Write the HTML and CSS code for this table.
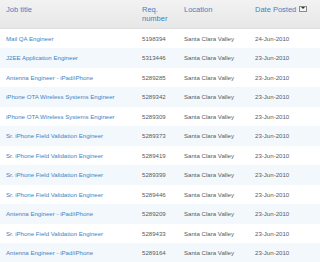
FILE: index.html
```html
<!DOCTYPE html>
<html lang="en">
  <head>
    <meta charset="UTF-8" />
    <title>Jobs</title>
    <link rel="stylesheet" href="styles.css">
  </head>
  <body>
    <table class="jobs">
      <colgroup>
        <col class="col-title" />
        <col class="col-req" />
        <col class="col-loc" />
        <col class="col-date" />
      </colgroup>
      <thead>
        <tr>
          <th>Job title</th>
          <th>Req.<br />number</th>
          <th>Location</th>
          <th>Date Posted <span class="sort-icon"></span></th>
        </tr>
      </thead>
      <tbody>
        <tr><td><a href="#">Mail QA Engineer</a></td><td>5198394</td><td>Santa Clara Valley</td><td>24-Jun-2010</td></tr>
        <tr><td><a href="#">J2EE Application Engineer</a></td><td>5313446</td><td>Santa Clara Valley</td><td>23-Jun-2010</td></tr>
        <tr><td><a href="#">Antenna Engineer - iPad/iPhone</a></td><td>5289285</td><td>Santa Clara Valley</td><td>23-Jun-2010</td></tr>
        <tr><td><a href="#">iPhone OTA Wireless Systems Engineer</a></td><td>5289342</td><td>Santa Clara Valley</td><td>23-Jun-2010</td></tr>
        <tr><td><a href="#">iPhone OTA Wireless Systems Engineer</a></td><td>5289309</td><td>Santa Clara Valley</td><td>23-Jun-2010</td></tr>
        <tr><td><a href="#">Sr. iPhone Field Validation Engineer</a></td><td>5289373</td><td>Santa Clara Valley</td><td>23-Jun-2010</td></tr>
        <tr><td><a href="#">Sr. iPhone Field Validation Engineer</a></td><td>5289419</td><td>Santa Clara Valley</td><td>23-Jun-2010</td></tr>
        <tr><td><a href="#">Sr. iPhone Field Validation Engineer</a></td><td>5289399</td><td>Santa Clara Valley</td><td>23-Jun-2010</td></tr>
        <tr><td><a href="#">Sr. iPhone Field Validation Engineer</a></td><td>5289446</td><td>Santa Clara Valley</td><td>23-Jun-2010</td></tr>
        <tr><td><a href="#">Antenna Engineer - iPad/iPhone</a></td><td>5289209</td><td>Santa Clara Valley</td><td>23-Jun-2010</td></tr>
        <tr><td><a href="#">Sr. iPhone Field Validation Engineer</a></td><td>5289433</td><td>Santa Clara Valley</td><td>23-Jun-2010</td></tr>
        <tr><td><a href="#">Antenna Engineer - iPad/iPhone</a></td><td>5289164</td><td>Santa Clara Valley</td><td>23-Jun-2010</td></tr>
      </tbody>
    </table>
  </body>
</html>
```

FILE: styles.css
```css
body {
  margin: 0;
  background: #ffffff;
  font-family: 'Liberation Sans', Arial, sans-serif;
}

.jobs {
  width: 320px;
  border-collapse: collapse;
  table-layout: fixed;
}

.col-title { width: 136px; }
.col-req { width: 42px; }
.col-loc { width: 71px; }
.col-date { width: 71px; }

.jobs th {
  height: 28px;
  padding: 6px 0 0 6px;
  box-sizing: border-box;
  vertical-align: top;
  text-align: left;
  font-size: 7.5px;
  font-weight: normal;
  line-height: 8.5px;
  color: #3d85c6;
  background: linear-gradient(#f2f2f2, #e7e7e7);
  border-bottom: 1px solid #dedede;
}

.jobs td {
  height: 19.5px;
  padding: 0 0 0 6px;
  font-size: 6.1px;
  color: #5a5a5a;
  white-space: nowrap;
  overflow: hidden;
}

.jobs tbody tr:nth-child(even) td {
  background: #f3f8fc;
}

.jobs a {
  color: #3d85c6;
  text-decoration: none;
}

.sort-icon {
  display: inline-block;
  width: 6px;
  height: 4px;
  margin-left: 1px;
  border: 1px solid #8a8a8a;
  background: #f4f4f4;
  vertical-align: 0;
  position: relative;
}

.sort-icon::after {
  content: "";
  position: absolute;
  left: 1px;
  top: 0;
  border-left: 2px solid transparent;
  border-right: 2px solid transparent;
  border-top: 2px solid #333333;
}
```
